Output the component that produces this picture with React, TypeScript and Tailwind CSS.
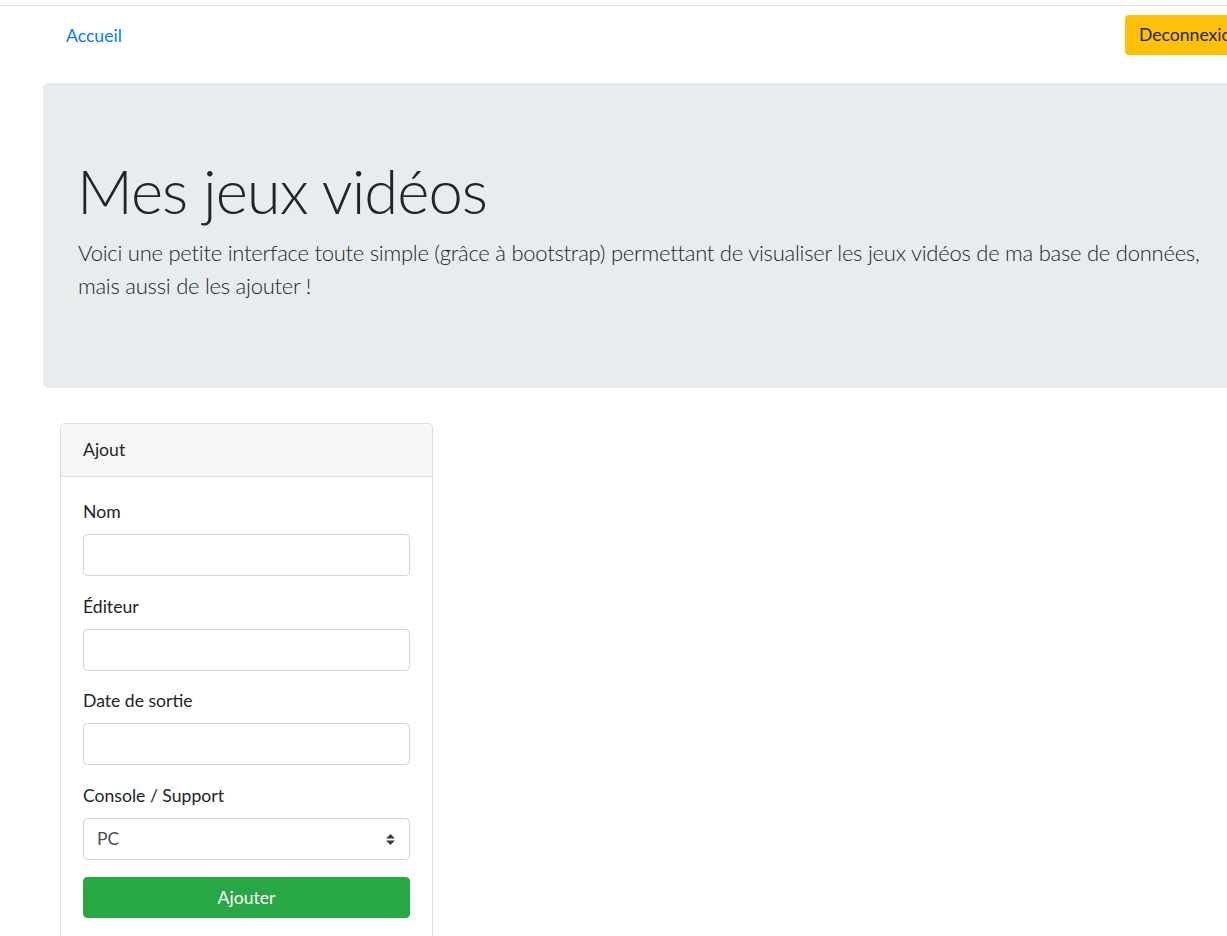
import React from "react";

const fields = [
	{ id: "nom", label: "Nom" },
	{ id: "editeur", label: "Éditeur" },
	{ id: "date", label: "Date de sortie" },
];

const App = () => {
	return (
		<div className="w-full min-h-screen overflow-hidden bg-white text-[#212529] font-['Lato','Open_Sans',sans-serif] text-[17.6px] leading-[26.4px]">
			<div className="w-[1300px]">
				<div className="h-[5px]" />
				<div className="h-px bg-[#dedede]" />

				<nav className="flex items-start h-[77px]">
					<a href="#" className="w-[1125px] pl-[66px] pt-[17px] text-[#007bff] no-underline">
						Accueil
					</a>
					<button className="mt-[9px] h-[40px] px-[14px] rounded-[4px] bg-[#ffc107] text-[#212529]">
						Deconnexion
					</button>
				</nav>

				<div className="ml-[43px] w-[1240px] rounded-[5px] bg-[#e9ecef] px-[35px] pt-[70px] pb-[86px]">
					<h1 className="text-[61.6px] leading-[74px] font-light mb-[9px] -ml-[1px] tracking-[-1px]">Mes jeux vidéos</h1>
					<p className="text-[22px] leading-[33px] font-light tracking-[-0.25px]">
						Voici une petite interface toute simple (grâce à bootstrap) permettant de visualiser les jeux vidéos de ma base de données,
						<br />
						mais aussi de les ajouter !
					</p>
				</div>

				<div className="ml-[60px] mt-[35px] w-[373px] rounded-t-[5px] border border-[#dfdfdf] border-b-0 h-[520px]">
					<div className="h-[53px] flex items-center px-[22px] bg-[#f7f7f7] border-b border-[#dfdfdf] rounded-t-[5px]">
						Ajout
					</div>
					<form className="px-[22px] pt-[22px]">
						{fields.map((f) => (
							<div key={f.id} className="mb-[17.6px]">
								<label htmlFor={f.id} className="block mb-[8.8px]">
									{f.label}
								</label>
								<input
									id={f.id}
									type="text"
									className="block w-full h-[41.8px] rounded-[4.4px] border border-[#ced4da] bg-white px-[13px] text-[#495057]"
								/>
							</div>
						))}
						<div className="mb-[17.6px]">
							<label className="block mb-[8.8px]">Console / Support</label>
							<div className="relative flex items-center h-[41.8px] rounded-[4.4px] border border-[#ced4da] bg-white pl-[13px] text-[#495057]">
								PC
								<svg className="absolute right-[14px] top-[15px]" width="9" height="11" viewBox="0 0 4 5">
									<path d="M2 0L0 2h4zm0 5L0 3h4z" fill="#343a40" />
								</svg>
							</div>
						</div>
						<button type="button" className="w-full h-[41px] rounded-[4.4px] bg-[#28a745] text-white">
							Ajouter
						</button>
					</form>
				</div>
			</div>
		</div>
	);
};

export default App;
